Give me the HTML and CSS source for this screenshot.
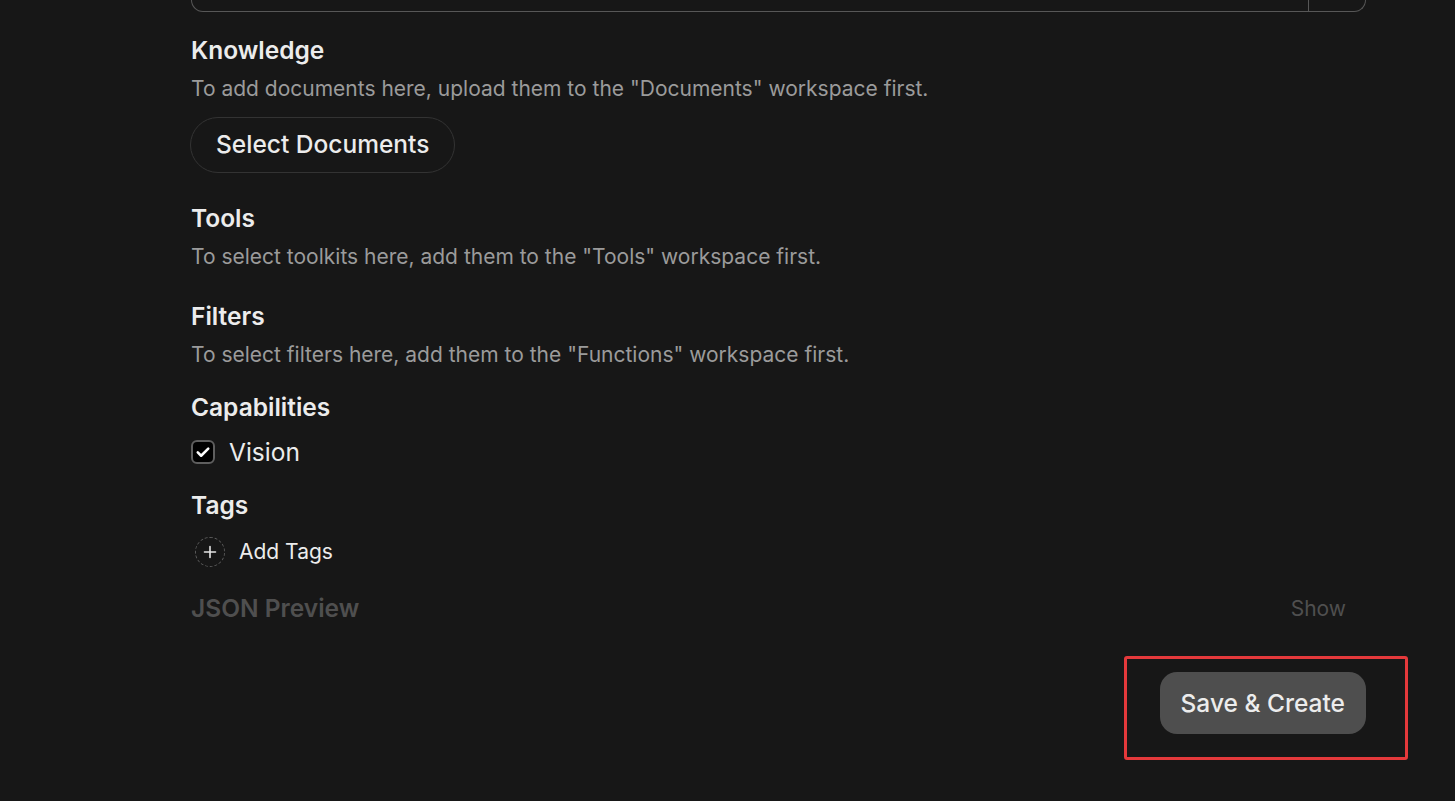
FILE: index.html
```html
<!DOCTYPE html>
<html>
<head>
<meta charset="utf-8">
<link rel="stylesheet" href="styles.css">
</head>
<body>
<div class="page">
  <div class="topbox">
    <div class="topbox-main"></div>
    <div class="topbox-side"></div>
  </div>

  <section class="sec sec-knowledge">
    <h2 class="title">Knowledge</h2>
    <p class="desc">To add documents here, upload them to the "Documents" workspace first.</p>
    <button class="btn-outline">Select Documents</button>
  </section>

  <section class="sec sec-tools">
    <h2 class="title">Tools</h2>
    <p class="desc">To select toolkits here, add them to the "Tools" workspace first.</p>
  </section>

  <section class="sec sec-filters">
    <h2 class="title">Filters</h2>
    <p class="desc">To select filters here, add them to the "Functions" workspace first.</p>
  </section>

  <section class="sec sec-cap">
    <h2 class="title">Capabilities</h2>
    <label class="check-row">
      <span class="checkbox">
        <svg viewBox="0 0 24 24" width="18" height="18"><path d="M5 12.5l4.5 4.5L19 7.5" fill="none" stroke="#fff" stroke-width="3.4" stroke-linecap="round" stroke-linejoin="round"/></svg>
      </span>
      <span class="check-label">Vision</span>
    </label>
  </section>

  <section class="sec sec-tags">
    <h2 class="title">Tags</h2>
    <div class="tag-row">
      <span class="add-circle">
        <svg viewBox="0 0 16 16" width="16" height="16"><path d="M8 2.5v11M2.5 8h11" stroke="#e5e5e5" stroke-width="1.6" stroke-linecap="round"/></svg>
      </span>
      <span class="tag-label">Add Tags</span>
    </div>
  </section>

  <section class="sec sec-json">
    <h2 class="title title-muted">JSON Preview</h2>
    <span class="show">Show</span>
  </section>

  <div class="actions">
    <button class="btn-save">Save &amp; Create</button>
    <div class="annot"></div>
  </div>
</div>
</body>
</html>
```

FILE: styles.css
```css
* { box-sizing: border-box; }
html, body {
  margin: 0;
  padding: 0;
  background: #171717;
  height: 100%;
  overflow: hidden;
}
body {
  font-family: Inter, "Noto Sans", sans-serif;
  color: #ececec;
}
.page {
  margin-left: 191px;
  width: 1175px;
}
.topbox {
  display: flex;
  height: 12px;
  border: 1px solid #575757;
  border-top: none;
  border-radius: 0 0 14px 14px;
}
.topbox-main { flex: 1; }
.topbox-side {
  width: 57px;
  border-left: 1px solid #575757;
}
.sec { margin: 0; }
.title {
  margin: 0;
  font-size: 24.5px;
  line-height: 30px;
  font-weight: 600;
  color: #ececec;
}
.desc {
  margin: 10px 0 0;
  font-size: 21px;
  line-height: 28px;
  color: #9b9b9b;
}
.sec-knowledge { margin-top: 23px; }
.btn-outline {
  margin-top: 14px;
  margin-left: -1px;
  height: 56px;
  padding: 0 25px 2px;
  border: 1px solid #333333;
  border-radius: 28px;
  background: transparent;
  color: #ececec;
  font-family: inherit;
  font-size: 24.5px;
  font-weight: 500;
}
.sec-tools { margin-top: 30px; }
.sec-filters { margin-top: 30px; }
.sec-cap { margin-top: 23px; }
.check-row {
  display: flex;
  align-items: center;
  gap: 14px;
  margin-top: 18px;
  height: 24px;
}
.checkbox {
  width: 24px;
  height: 24px;
  border: 2px solid #5e5e5e;
  border-radius: 6px;
  background: #000;
  display: flex;
  align-items: center;
  justify-content: center;
}
.check-label {
  font-size: 24.5px;
  line-height: 30px;
  color: #ececec;
}
.sec-tags { margin-top: 26px; }
.tag-row {
  display: flex;
  align-items: center;
  gap: 14px;
  margin-top: 17px;
  margin-left: 4px;
  height: 30px;
}
.add-circle {
  width: 30px;
  height: 30px;
  border: 1px dashed #5c5c5c;
  border-radius: 50%;
  display: flex;
  align-items: center;
  justify-content: center;
}
.tag-label {
  font-size: 21px;
  line-height: 28px;
  color: #ececec;
}
.sec-json {
  margin-top: 26px;
  display: flex;
  justify-content: space-between;
  align-items: center;
  padding-right: 20px;
}
.title-muted { color: #4f4f4f; }
.show {
  font-size: 21px;
  color: #4f4f4f;
}
.actions {
  position: relative;
  display: flex;
  justify-content: flex-end;
  margin-top: 49px;
}
.btn-save {
  height: 62px;
  padding: 0 21px;
  border: none;
  border-radius: 17px;
  background: #4e4e4e;
  color: #ececec;
  font-family: inherit;
  font-size: 24.5px;
  font-weight: 500;
}
.annot {
  position: absolute;
  left: 933px;
  top: -16px;
  width: 284px;
  height: 104px;
  border: 3px solid #e5393b;
  border-radius: 3px;
  pointer-events: none;
}
```
